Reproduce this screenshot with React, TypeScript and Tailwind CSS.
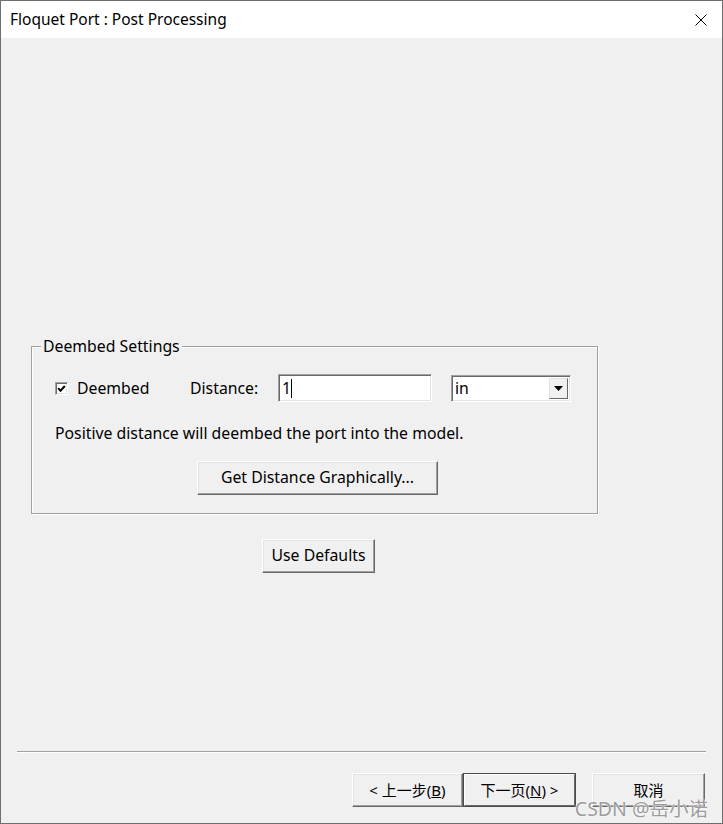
const font = '[font-family:"Noto_Sans","Noto_Sans_CJK_SC",sans-serif]';

function RaisedButton({ label, className = '' }: { label: React.ReactNode; className?: string }) {
  return (
    <button
      className={`h-[34px] flex items-center justify-center bg-[#f0f0f0] border border-t-white border-l-white border-r-[#696969] border-b-[#696969] shadow-[inset_-1px_-1px_0_#a0a0a0,inset_1px_1px_0_#e3e3e3] text-black ${className}`}
    >
      {label}
    </button>
  );
}

function CloseIcon() {
  return (
    <svg width="12" height="12" viewBox="0 0 12 12" fill="none" stroke="#000" strokeWidth="1">
      <path d="M0.5 0.5 L11.5 11.5 M11.5 0.5 L0.5 11.5" />
    </svg>
  );
}

export default function App() {
  return (
    <div className={`relative w-[723px] h-[824px] flex flex-col border border-[#6f6f6f] bg-[#f0f0f0] ${font} text-black`}>
      {/* Title bar */}
      <div className="h-[37px] bg-white flex items-center justify-between pl-[9px] pr-[15px] shrink-0">
        <span className="text-[15.5px] leading-none">Floquet Port : Post Processing</span>
        <CloseIcon />
      </div>

      {/* Body */}
      <div className="flex-1 flex flex-col">
        {/* Group box */}
        <div className="mt-[308px] ml-[30px] w-[567px] h-[168px] border border-[#a0a0a0] shadow-[1px_1px_0_#fff,inset_1px_1px_0_#fff] flex flex-col text-[15.8px]">
          <span className="-mt-[11px] ml-[9px] px-[2px] w-fit bg-[#f0f0f0] leading-[20px]">Deembed Settings</span>

          <div className="mt-[18px] pl-[23px] flex items-center h-[28px]">
            <div className="w-[135px] flex items-center">
              <span className="w-[13px] h-[13px] bg-white border border-t-[#a0a0a0] border-l-[#a0a0a0] border-r-white border-b-white shadow-[inset_1px_1px_0_#696969,inset_-1px_-1px_0_#e3e3e3] flex items-center justify-center">
                <svg width="9" height="9" viewBox="0 0 9 9" fill="none" stroke="#000" strokeWidth="2">
                  <path d="M1.2 4.2 L3.5 6.8 L7.8 2" />
                </svg>
              </span>
              <span className="ml-[9px] leading-[20px]">Deembed</span>
            </div>
            <span className="w-[88px] leading-[20px]">Distance:</span>
            <div className="w-[154px] h-[28px] bg-white border border-t-[#a0a0a0] border-l-[#a0a0a0] border-r-white border-b-white shadow-[inset_1px_1px_0_#696969,inset_-1px_-1px_0_#e3e3e3] flex items-center pl-[3px]">
              <span className="leading-[20px]">1</span>
              <span className="w-px h-[19px] bg-black" />
            </div>
            <div className="ml-[19px] w-[120px] h-[27px] bg-white border border-t-[#a0a0a0] border-l-[#a0a0a0] border-r-white border-b-white shadow-[inset_1px_1px_0_#696969,inset_-1px_-1px_0_#e3e3e3] flex items-center p-[2px]">
              <span className="flex-1 leading-[20px] pl-[1px]">in</span>
              <span className="w-[19px] h-full bg-[#f0f0f0] border border-t-[#e3e3e3] border-l-[#e3e3e3] border-r-[#696969] border-b-[#696969] flex items-center justify-center">
                <svg width="9" height="5" viewBox="0 0 9 5">
                  <path d="M0 0 H9 L4.5 5 Z" fill="#000" />
                </svg>
              </span>
            </div>
          </div>

          <p className="mt-[21px] pl-[23px] leading-[20px]">Positive distance will deembed the port into the model.</p>

          <RaisedButton label="Get Distance Graphically..." className="mt-[18px] ml-[165px] w-[241px]" />
        </div>

        <RaisedButton label="Use Defaults" className="mt-[25px] ml-[261px] w-[113px] text-[15.8px]" />

        {/* Separator */}
        <div className="mt-[178px] ml-[16px] w-[689px] h-[2px] border-t border-t-[#a0a0a0] border-b border-b-white" />

        {/* Footer buttons */}
        <div className="mt-[20px] ml-[351px] flex text-[15px]">
          <RaisedButton label={<span>&lt; 上一步(<u>B</u>)</span>} className="w-[111px]" />
          <div className="w-[113px] h-[34px] border border-[#4a4a4a] flex">
            <button className="flex-1 flex items-center justify-center bg-[#f0f0f0] border border-t-white border-l-white border-r-[#696969] border-b-[#696969]">
              <span>下一页(<u>N</u>) &gt;</span>
            </button>
          </div>
          <RaisedButton label="取消" className="ml-[16px] w-[113px]" />
        </div>
      </div>

      {/* Watermark */}
      <span className="absolute right-[14px] bottom-[2px] text-[19.5px] leading-[24px] text-[#9c9c9c] [text-shadow:0_0_2px_#fff,0_0_1px_#fff] pointer-events-none">
        CSDN @岳小诺
      </span>
    </div>
  );
}
